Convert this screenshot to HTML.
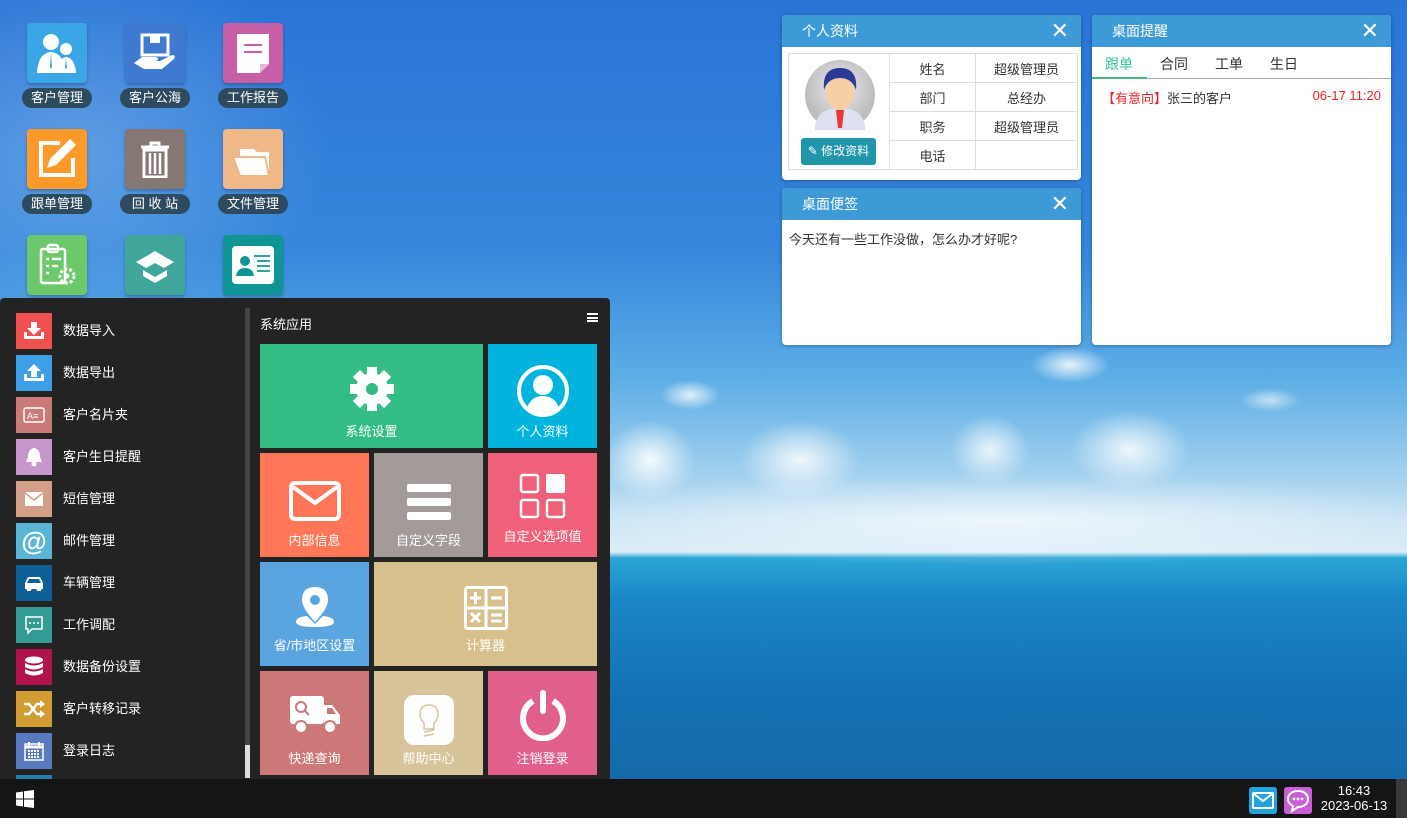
<!DOCTYPE html>
<html><head><meta charset="utf-8">
<style>
*{margin:0;padding:0;box-sizing:border-box}
body{width:1407px;height:818px;overflow:hidden;position:relative;font-family:"Liberation Sans","Noto Sans CJK SC",sans-serif;font-size:13px;
background:
radial-gradient(ellipse 30px 15px at 690px 395px,rgba(255,255,255,.8),rgba(255,255,255,0)),
radial-gradient(ellipse 40px 18px at 1070px 365px,rgba(255,255,255,.85),rgba(255,255,255,0)),
radial-gradient(ellipse 30px 12px at 1270px 400px,rgba(255,255,255,.6),rgba(255,255,255,0)),
radial-gradient(ellipse 45px 40px at 650px 460px,rgba(255,255,255,.9),rgba(255,255,255,0)),
radial-gradient(ellipse 60px 40px at 800px 460px,rgba(255,255,255,.85),rgba(255,255,255,0)),
radial-gradient(ellipse 40px 35px at 990px 450px,rgba(255,255,255,.8),rgba(255,255,255,0)),
radial-gradient(ellipse 60px 40px at 1130px 450px,rgba(255,255,255,.85),rgba(255,255,255,0)),
radial-gradient(ellipse 500px 45px at 1000px 520px,rgba(255,255,255,.7),rgba(255,255,255,0)),
radial-gradient(ellipse 250px 200px at 80px 150px,rgba(200,225,250,.3),rgba(255,255,255,0)),
linear-gradient(180deg,#2a74d6 0px,#3587dc 250px,#5eaee6 380px,#9fcfee 470px,#dcedf7 552px,#2aa6d6 558px,#1a86c6 600px,#1470b3 700px,#156aa9 780px);}
.di{position:absolute;width:60px;height:60px;border-radius:4px;box-shadow:0 2px 3px rgba(0,0,0,.25);display:flex;align-items:center;justify-content:center}
.dl{position:absolute;width:70px;height:20px;border-radius:10px;background:#2d4a5e;color:#fff;font-size:13px;text-align:center;line-height:20px}
.panel{position:absolute;background:#fff;border-radius:4px;overflow:hidden;box-shadow:0 1px 4px rgba(0,0,0,.3)}
.ph{height:32px;background:#3d9ad6;color:#fff;font-size:14px;line-height:32px;padding-left:20px;position:relative}
.ph .x{position:absolute;right:12px;top:0;font-size:22px;font-weight:300}
.menu{position:absolute;left:0;top:298px;width:610px;height:481px;background:#232323;border-radius:4px 4px 0 0}
.li{position:absolute;left:16px;width:36px;height:36px;display:flex;align-items:center;justify-content:center}
.lt{position:absolute;left:63px;color:#fff;font-size:13px}
.t{position:absolute;color:#fff;font-size:13px;text-align:center}
.t span{position:absolute;left:0;right:0;bottom:8px}
.t svg{position:absolute;left:50%;transform:translateX(-50%)}
table{border-collapse:collapse;table-layout:fixed}
td{border:1px solid #ddd;text-align:center;color:#333;font-size:13px;padding:0}
</style></head><body>

<div class="di" style="left:27px;top:23px;background:#3aa6e6"><svg width="44" height="40" viewBox="0 0 44 40"><circle cx="16" cy="9" r="8" fill="#fff"/><path d="M2 40 Q3 20 16 19 Q29 20 30 40Z" fill="#fff"/><circle cx="31" cy="16" r="6" fill="#fff"/><path d="M22 40 Q23 25 31 24 Q40 25 41 40Z" fill="#fff"/><path d="M16 20 l-1 14 1 2 1-2z M31 25 l-1 10 1 1 1-1z" fill="#3aa6e6"/></svg></div>
<div class="dl" style="left:22px;top:88px">客户管理</div>
<div class="di" style="left:125px;top:23px;background:#3e7bd0"><svg width="46" height="40" viewBox="0 0 46 40"><path d="M10 2h26v20H10z" fill="none" stroke="#fff" stroke-width="3"/><path d="M18 2h10v8H18z" fill="#fff"/><path d="M2 30 l8-6 h14 q4 2 0 4 h-8 h12 l12-6 q4 0 2 4 l-12 10 H12z" fill="#fff"/></svg></div>
<div class="dl" style="left:120px;top:88px">客户公海</div>
<div class="di" style="left:223px;top:23px;background:#c65fa8"><svg width="40" height="44" viewBox="0 0 40 44"><path d="M4 3h32v30l-9 9H4z" fill="#fff"/><path d="M11 14h18M11 21h18" stroke="#c65fa8" stroke-width="2"/><path d="M27 42v-9h9" fill="#e9b6da"/></svg></div>
<div class="dl" style="left:218px;top:88px">工作报告</div>

<div class="di" style="left:27px;top:129px;background:#ff9a2a"><svg width="46" height="46" viewBox="0 0 46 46"><path d="M26 7H7v32h32V22" fill="none" stroke="#fff" stroke-width="4"/><path d="M36 3l6 6-20 20-9 3 3-9z" fill="#fff"/></svg></div>
<div class="dl" style="left:22px;top:194px">跟单管理</div>
<div class="di" style="left:125px;top:129px;background:#857872"><svg width="30" height="38" viewBox="0 0 30 38"><path d="M1 7h28M11 7V3h8v4" fill="none" stroke="#fff" stroke-width="3"/><path d="M4 10h22v27H4z" fill="none" stroke="#fff" stroke-width="3"/><path d="M10 13v21M15 13v21M20 13v21" stroke="#fff" stroke-width="2.5"/></svg></div>
<div class="dl" style="left:120px;top:194px">回 收 站</div>
<div class="di" style="left:223px;top:129px;background:#f0b889"><svg width="42" height="36" viewBox="0 0 42 36"><path d="M8 8h14l3 3h12v24H8z" fill="#fff"/><path d="M1 16h32l4 19H8z" fill="#fff" stroke="#f0b889" stroke-width="2"/></svg></div>
<div class="dl" style="left:218px;top:194px">文件管理</div>

<div class="di" style="left:27px;top:235px;background:#6bc96b"><svg width="40" height="44" viewBox="0 0 40 44"><rect x="4" y="6" width="24" height="34" rx="2" fill="none" stroke="#fff" stroke-width="2.5"/><rect x="11" y="2" width="10" height="7" rx="2" fill="none" stroke="#fff" stroke-width="2.5"/><path d="M9 16h3M9 23h3M9 30h3M15 16h9M15 23h6" stroke="#fff" stroke-width="2.5"/><circle cx="30" cy="33" r="7" fill="none" stroke="#fff" stroke-width="3" stroke-dasharray="3 2"/><circle cx="30" cy="33" r="2.5" fill="#fff"/></svg></div>
<div class="di" style="left:125px;top:235px;background:#40a59a"><svg width="42" height="40" viewBox="0 0 42 40"><path d="M21 6l10 6-10 6-10-6z M11 12l-9 5 10 6 9-5z M31 12l9 5-10 6-9-5z" fill="#fff"/><path d="M9 25l12 7 12-7v6l-12 7-12-7z" fill="#fff"/></svg></div>
<div class="di" style="left:223px;top:235px;background:#0f9694"><svg width="46" height="42" viewBox="0 0 46 42"><rect x="2" y="2" width="42" height="38" rx="4" fill="#fff"/><circle cx="15" cy="17" r="5" fill="#0f9694"/><path d="M6 32q1-8 9-8t9 8z" fill="#0f9694"/><path d="M24 12h16M27 17h13M27 22h13M27 27h13" stroke="#0f9694" stroke-width="1.8"/></svg></div>

<div class="menu">
 <div style="position:absolute;left:245px;top:10px;width:5px;height:470px;background:#444"></div>
 <div style="position:absolute;left:245px;top:447px;width:5px;height:33px;background:#ddd"></div>
 <div class="li" style="top:15px;background:#ef5050"><svg width="22" height="18" viewBox="0 0 22 18"><path d="M8 0h6v6h4l-7 7-7-7h4z" fill="#fff"/><path d="M1 10v7h20v-7h-3v4H4v-4z" fill="#fff"/></svg></div><div class="lt" style="top:22px">数据导入</div>
 <div class="li" style="top:57px;background:#3d9fe6"><svg width="22" height="18" viewBox="0 0 22 18"><path d="M8 13h6V7h4L11 0 4 7h4z" fill="#fff"/><path d="M1 10v7h20v-7h-3v4H4v-4z" fill="#fff"/></svg></div><div class="lt" style="top:64px">数据导出</div>
 <div class="li" style="top:99px;background:#cb7a7a"><svg width="22" height="16" viewBox="0 0 22 16"><rect x="1" y="1" width="20" height="14" rx="2" fill="none" stroke="#fff" stroke-width="1.5"/><text x="4" y="12" fill="#fff" font-size="9" font-family="Liberation Sans">A≡</text></svg></div><div class="lt" style="top:106px">客户名片夹</div>
 <div class="li" style="top:141px;background:#c796cc"><svg width="18" height="20" viewBox="0 0 18 20"><path d="M9 1q6 1 6 9l2 5H1l2-5q0-8 6-9z" fill="#fff"/><circle cx="9" cy="17" r="2.5" fill="#fff"/></svg></div><div class="lt" style="top:148px">客户生日提醒</div>
 <div class="li" style="top:183px;background:#d29f88"><svg width="20" height="16" viewBox="0 0 20 16"><rect x="1" y="1" width="18" height="14" fill="#fff"/><path d="M1 2l9 7 9-7" fill="none" stroke="#d29f88" stroke-width="1.5"/></svg></div><div class="lt" style="top:190px">短信管理</div>
 <div class="li" style="top:225px;background:#5ab5d6;color:#fff;font-size:26px;font-weight:bold">@</div><div class="lt" style="top:232px">邮件管理</div>
 <div class="li" style="top:267px;background:#0d6096"><svg width="22" height="16" viewBox="0 0 22 16"><path d="M5 2h12l3 6v6H2V8z" fill="#fff"/><path d="M6 4h10l2 4H4z" fill="#0d6096"/><circle cx="6" cy="14" r="2.5" fill="#fff"/><circle cx="16" cy="14" r="2.5" fill="#fff"/></svg></div><div class="lt" style="top:274px">车辆管理</div>
 <div class="li" style="top:309px;background:#339b94"><svg width="20" height="20" viewBox="0 0 20 20"><path d="M2 2h16v12H8l-4 4v-4H2z" fill="none" stroke="#fff" stroke-width="1.5"/><circle cx="6" cy="8" r="1" fill="#fff"/><circle cx="10" cy="8" r="1" fill="#fff"/><circle cx="14" cy="8" r="1" fill="#fff"/></svg></div><div class="lt" style="top:316px">工作调配</div>
 <div class="li" style="top:351px;background:#b0124b"><svg width="20" height="22" viewBox="0 0 20 22"><ellipse cx="10" cy="4" rx="9" ry="3.5" fill="#fff"/><path d="M1 7q9 5 18 0v4q-9 5-18 0zM1 13q9 5 18 0v4q-9 5-18 0z" fill="#fff"/></svg></div><div class="lt" style="top:358px">数据备份设置</div>
 <div class="li" style="top:393px;background:#d19c34"><svg width="22" height="18" viewBox="0 0 22 18"><path d="M1 4h5l8 10h4M1 14h5l8-10h4" fill="none" stroke="#fff" stroke-width="2.5"/><path d="M17 0l5 4-5 4zM17 10l5 4-5 4z" fill="#fff"/></svg></div><div class="lt" style="top:400px">客户转移记录</div>
 <div class="li" style="top:435px;background:#5a7abf"><svg width="20" height="20" viewBox="0 0 20 20"><rect x="1" y="3" width="18" height="16" fill="none" stroke="#fff" stroke-width="1.5"/><path d="M1 6h18" stroke="#fff" stroke-width="3"/><path d="M5 1v4M15 1v4" stroke="#fff" stroke-width="2"/><path d="M4 10h12M4 13h12M4 16h12" stroke="#fff" stroke-width="2" stroke-dasharray="2 1"/></svg></div><div class="lt" style="top:442px">登录日志</div>
 <div class="li" style="top:477px;height:4px;background:#2a7bb0"></div>

 <div style="position:absolute;left:260px;top:16px;color:#fff;font-size:13px">系统应用</div>
 <div style="position:absolute;left:587px;top:15px;width:11px;height:9px;border-top:2px solid #fff;border-bottom:2px solid #fff"><div style="margin-top:1.5px;height:2px;background:#fff"></div></div>

 <div class="t" style="left:260px;top:46px;width:223px;height:104px;background:#33bd85"><svg style="top:22px" width="46" height="46" viewBox="0 0 46 46"><g fill="#fff"><circle cx="23" cy="23" r="16"/><g><rect x="18" y="1" width="10" height="10"/><rect x="18" y="35" width="10" height="10"/><rect x="1" y="18" width="10" height="10"/><rect x="35" y="18" width="10" height="10"/></g><g transform="rotate(45 23 23)"><rect x="18" y="1" width="10" height="10"/><rect x="18" y="35" width="10" height="10"/><rect x="1" y="18" width="10" height="10"/><rect x="35" y="18" width="10" height="10"/></g></g><circle cx="23" cy="23" r="6" fill="#33bd85"/></svg><span>系统设置</span></div>
 <div class="t" style="left:488px;top:46px;width:109px;height:104px;background:#00b4dd"><svg style="top:20px" width="54" height="54" viewBox="0 0 54 54"><circle cx="27" cy="27" r="24" fill="none" stroke="#fff" stroke-width="4"/><circle cx="27" cy="21" r="10" fill="#fff"/><path d="M11 44q4-12 16-12t16 12q-16 10-32 0z" fill="#fff"/></svg><span>个人资料</span></div>

 <div class="t" style="left:260px;top:155px;width:109px;height:104px;background:#ff7757"><svg style="top:28px" width="52" height="40" viewBox="0 0 52 40"><rect x="2" y="2" width="48" height="36" rx="4" fill="none" stroke="#fff" stroke-width="4"/><path d="M4 6l22 16 22-16" fill="none" stroke="#fff" stroke-width="4"/></svg><span>内部信息</span></div>
 <div class="t" style="left:374px;top:155px;width:109px;height:104px;background:#a39a9a"><svg style="top:30px" width="46" height="38" viewBox="0 0 46 38"><rect x="1" y="1" width="44" height="8" rx="2" fill="#fff"/><rect x="1" y="15" width="44" height="8" rx="2" fill="#fff"/><rect x="1" y="29" width="44" height="8" rx="2" fill="#fff"/></svg><span>自定义字段</span></div>
 <div class="t" style="left:488px;top:155px;width:109px;height:104px;background:#f06078"><svg style="top:20px" width="48" height="48" viewBox="0 0 48 48"><rect x="2" y="2" width="17" height="17" rx="2" fill="none" stroke="#fff" stroke-width="2.5"/><rect x="27" y="1" width="19" height="19" rx="2" fill="#fff"/><rect x="2" y="27" width="17" height="17" rx="2" fill="none" stroke="#fff" stroke-width="2.5"/><rect x="28" y="27" width="17" height="17" rx="2" fill="none" stroke="#fff" stroke-width="2.5"/></svg><span style="bottom:12px">自定义选项值</span></div>

 <div class="t" style="left:260px;top:264px;width:109px;height:104px;background:#5aa5df"><svg style="top:24px" width="40" height="42" viewBox="0 0 40 42"><path d="M20 1q13 0 13 13q0 8-13 22Q7 22 7 14Q7 1 20 1z" fill="#fff"/><circle cx="20" cy="14" r="5" fill="#5aa5df"/><path d="M12 30Q1 31 1 36t19 5 19-5-11-6l-8 8z" fill="#fff"/></svg><span style="bottom:12px">省/市地区设置</span></div>
 <div class="t" style="left:374px;top:264px;width:223px;height:104px;background:#d8c08c"><svg style="top:24px" width="44" height="44" viewBox="0 0 44 44"><rect x="1.5" y="1.5" width="41" height="41" rx="2" fill="none" stroke="#fff" stroke-width="3"/><path d="M22 2v40M2 22h40" stroke="#fff" stroke-width="3"/><path d="M6 12h11M11.5 6v12M27 12h11M7 27l9 9M16 27l-9 9M27 29h11M27 35h11" stroke="#fff" stroke-width="3"/></svg><span style="bottom:12px">计算器</span></div>

 <div class="t" style="left:260px;top:373px;width:109px;height:104px;background:#cc7878"><svg style="top:24px" width="52" height="40" viewBox="0 0 52 40"><rect x="1" y="1" width="34" height="28" rx="3" fill="#fff"/><path d="M35 10h8l8 10v9H35z" fill="#fff"/><path d="M38 13h5l4 6h-9z" fill="#cc7878"/><circle cx="12" cy="12" r="5" fill="none" stroke="#cc7878" stroke-width="2"/><path d="M16 16l4 4" stroke="#cc7878" stroke-width="2"/><circle cx="12" cy="32" r="6" fill="#fff" stroke="#cc7878" stroke-width="2"/><circle cx="41" cy="32" r="6" fill="#fff" stroke="#cc7878" stroke-width="2"/></svg><span>快递查询</span></div>
 <div class="t" style="left:374px;top:373px;width:109px;height:104px;background:#d8c49a"><svg style="top:24px" width="50" height="50" viewBox="0 0 50 50"><rect x="0" y="0" width="50" height="50" rx="10" fill="#fff"/><path d="M25 10q9 0 9 9q0 5-4 9v6H20v-6q-4-4-4-9q0-9 9-9z" fill="none" stroke="#d8c49a" stroke-width="1.5"/><path d="M20 37l10-2M20 41l10-2" stroke="#d8c49a" stroke-width="1.5"/></svg><span>帮助中心</span></div>
 <div class="t" style="left:488px;top:373px;width:109px;height:104px;background:#e0608a"><svg style="top:18px" width="48" height="52" viewBox="0 0 48 52"><path d="M14 12A20 20 0 1 0 34 12" fill="none" stroke="#fff" stroke-width="6"/><rect x="21" y="1" width="6" height="24" rx="3" fill="#fff"/></svg><span>注销登录</span></div>
</div>

<div class="panel" style="left:782px;top:15px;width:299px;height:165px">
 <div class="ph">个人资料<span class="x">✕</span></div>
 <table style="position:absolute;left:6px;top:38px;width:289px;height:117px">
  <colgroup><col style="width:101px"><col style="width:86px"><col style="width:102px"></colgroup>
  <tr><td rowspan="4" style="position:relative">
   <svg width="70" height="70" viewBox="0 0 70 70" style="position:absolute;left:16px;top:6px"><defs><radialGradient id="g1" cx="50%" cy="40%"><stop offset="0" stop-color="#ececec"/><stop offset="1" stop-color="#bdbdc0"/></radialGradient></defs><circle cx="35" cy="35" r="35" fill="url(#g1)"/><path d="M10 70q0-22 25-22t25 22z" fill="#dde0ee"/><path d="M31 50h8l-2 18h-4z" fill="#e33"/><ellipse cx="35" cy="33" rx="14" ry="17" fill="#f6cfa7"/><path d="M19 30q-2-22 16-22t16 22q-4-12-16-12t-16 12z" fill="#2a3a98"/></svg>
   <div style="position:absolute;left:12px;top:84px;width:75px;height:27px;background:#2196a9;border-radius:3px;color:#fff;font-size:12px;line-height:27px">✎ 修改资料</div>
  </td><td>姓名</td><td>超级管理员</td></tr>
  <tr><td>部门</td><td>总经办</td></tr>
  <tr><td>职务</td><td>超级管理员</td></tr>
  <tr><td>电话</td><td></td></tr>
 </table>
</div>

<div class="panel" style="left:782px;top:188px;width:299px;height:157px">
 <div class="ph">桌面便签<span class="x">✕</span></div>
 <div style="padding:9px 7px;color:#333;font-size:13px">今天还有一些工作没做，怎么办才好呢?</div>
</div>

<div class="panel" style="left:1092px;top:15px;width:299px;height:330px">
 <div class="ph">桌面提醒<span class="x">✕</span></div>
 <div style="position:relative;height:32px;border-bottom:1px solid #aaa;font-size:14px;color:#333">
  <span style="position:absolute;left:13px;top:7px;color:#2ec4a0">跟单</span>
  <span style="position:absolute;left:68px;top:7px">合同</span>
  <span style="position:absolute;left:123px;top:7px">工单</span>
  <span style="position:absolute;left:178px;top:7px">生日</span>
  <div style="position:absolute;left:0;bottom:-1px;width:55px;height:2px;background:#4cb87a"></div>
 </div>
 <div style="position:absolute;left:10px;top:73px;font-size:13px;color:#333"><span style="color:#e22">【有意向】</span>张三的客户</div>
 <div style="position:absolute;right:10px;top:73px;font-size:13px;color:#e22">06-17 11:20</div>
</div>

<div style="position:absolute;left:0;top:779px;width:1407px;height:39px;background:#151515">
 <svg style="position:absolute;left:16px;top:11px" width="18" height="18" viewBox="0 0 18 18"><path d="M0 2.5l7-1v7H0zM8 1.3L18 0v8.5H8zM0 9.5h7v7l-7-1zM8 9.5h10V18L8 16.7z" fill="#fff"/></svg>
 <div style="position:absolute;left:1249px;top:8px;width:28px;height:27px;background:#23a3dc;border-radius:3px"><svg width="28" height="27" viewBox="0 0 28 27"><rect x="4" y="6" width="20" height="15" rx="1" fill="none" stroke="#fff" stroke-width="2"/><path d="M5 7l9 7 9-7" fill="none" stroke="#fff" stroke-width="2"/></svg></div>
 <div style="position:absolute;left:1284px;top:8px;width:28px;height:27px;background:#c95fd6;border-radius:3px"><svg width="28" height="27" viewBox="0 0 28 27"><path d="M14 4c6 0 10 3.5 10 8s-4 8-10 8l-6 4 1-5c-3-1.5-5-4-5-7 0-4.5 4-8 10-8z" fill="none" stroke="#fff" stroke-width="2"/><circle cx="10" cy="12" r="1.4" fill="#fff"/><circle cx="14" cy="12" r="1.4" fill="#fff"/><circle cx="18" cy="12" r="1.4" fill="#fff"/></svg></div>
 <div style="position:absolute;left:1316px;top:4px;width:76px;color:#fff;font-size:13px;text-align:center;line-height:15px">16:43<br>2023-06-13</div>
 <div style="position:absolute;left:1396px;top:0;width:11px;height:39px;background:#3a3a3a"></div>
</div>
</body></html>
